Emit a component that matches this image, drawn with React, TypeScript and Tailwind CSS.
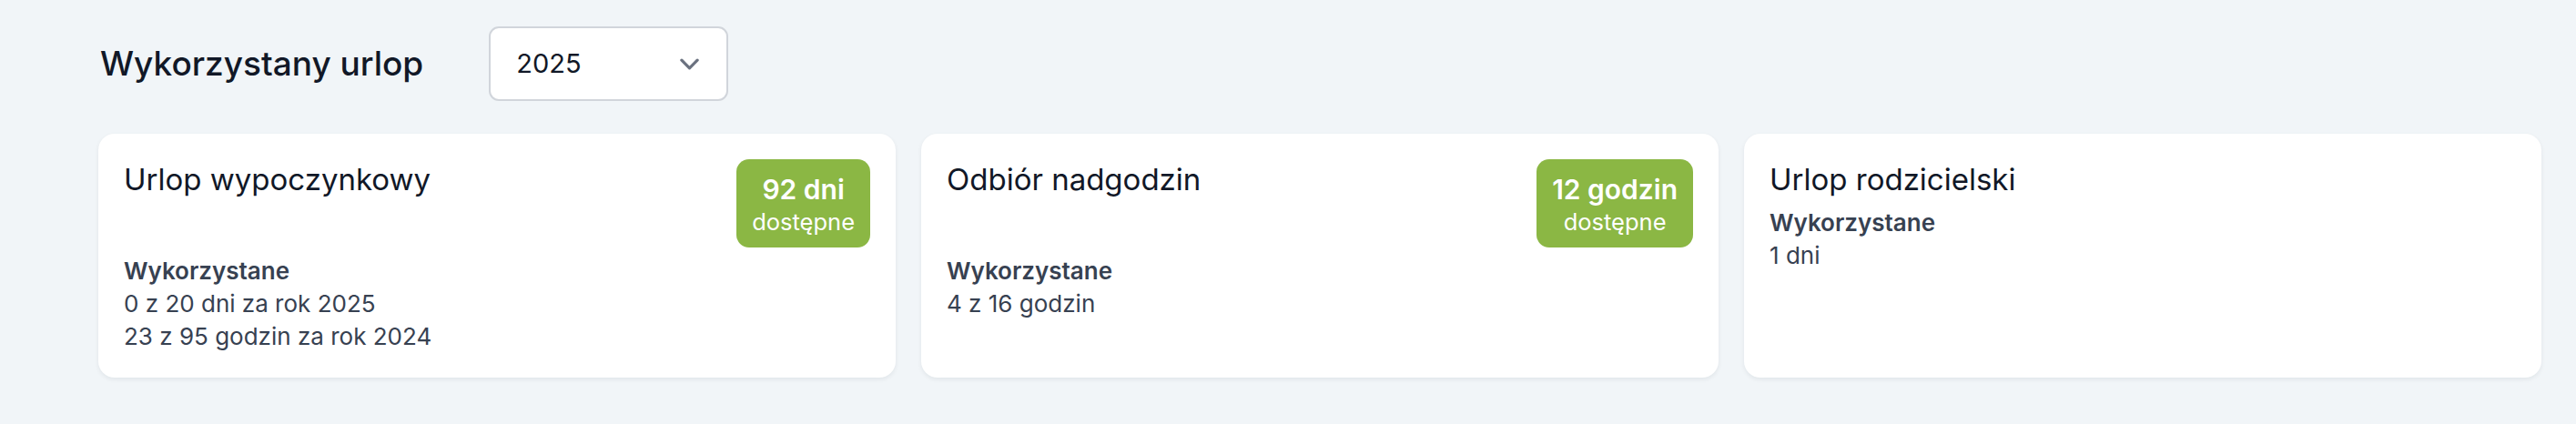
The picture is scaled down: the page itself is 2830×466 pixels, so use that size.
const cards = [
  {
    title: "Urlop wypoczynkowy",
    badge: "92 dni",
    lines: ["0 z 20 dni za rok 2025", "23 z 95 godzin za rok 2024"],
  },
  {
    title: "Odbiór nadgodzin",
    badge: "12 godzin",
    lines: ["4 z 16 godzin"],
  },
  {
    title: "Urlop rodzicielski",
    badge: null,
    lines: ["1 dni"],
  },
];

const Badge = ({ text }: { text: string }) => (
  <div className="flex flex-col items-center shrink-0 rounded-[14px] bg-[#8bb744] px-[17px] py-[13px] text-white">
    <span className="text-[30px] leading-[41px] font-semibold">{text}</span>
    <span className="text-[25.5px] leading-[30px]">dostępne</span>
  </div>
);

export default function App() {
  return (
    <div
      className="min-h-screen bg-[#f1f5f8] pl-[108px] pr-[38px] pt-[29px]"
      style={{ fontFamily: "Inter, 'Noto Sans', sans-serif" }}>
      <div className="flex items-center gap-[72px]">
        <h2 className="ml-[2px] text-[37px] leading-[50px] font-medium text-[#111827]">
          Wykorzystany urlop
        </h2>
        <div className="flex h-[82px] w-[263px] items-center justify-between rounded-[11px] border-2 border-[#d1d5db] bg-white pl-[28px] pr-[19px]">
          <span className="text-[29px] text-[#111827]">2025</span>
          <svg width="43" height="43" viewBox="0 0 20 20" fill="none">
            <path
              d="M6 8l4 4 4-4"
              stroke="#6b7280"
              strokeWidth="1.5"
              strokeLinecap="round"
              strokeLinejoin="round"
            />
          </svg>
        </div>
      </div>

      <div className="mt-[36px] grid grid-cols-3 gap-[28px]">
        {cards.map((card) => (
          <div
            key={card.title}
            className="rounded-[18px] bg-white px-[28px] pt-[28px] pb-[27px] shadow-[0_2px_5px_rgba(15,23,42,0.07)]">
            <div className="flex items-start justify-between gap-4">
              <h3 className="text-[33px] leading-[44px] text-[#111827]">{card.title}</h3>
              {card.badge && <Badge text={card.badge} />}
            </div>
            <div className="mt-[8px] text-[26px] leading-[36px] text-[#374151]">
              <p className="font-semibold">Wykorzystane</p>
              {card.lines.map((line) => (
                <p key={line}>{line}</p>
              ))}
            </div>
          </div>
        ))}
      </div>
    </div>
  );
}
